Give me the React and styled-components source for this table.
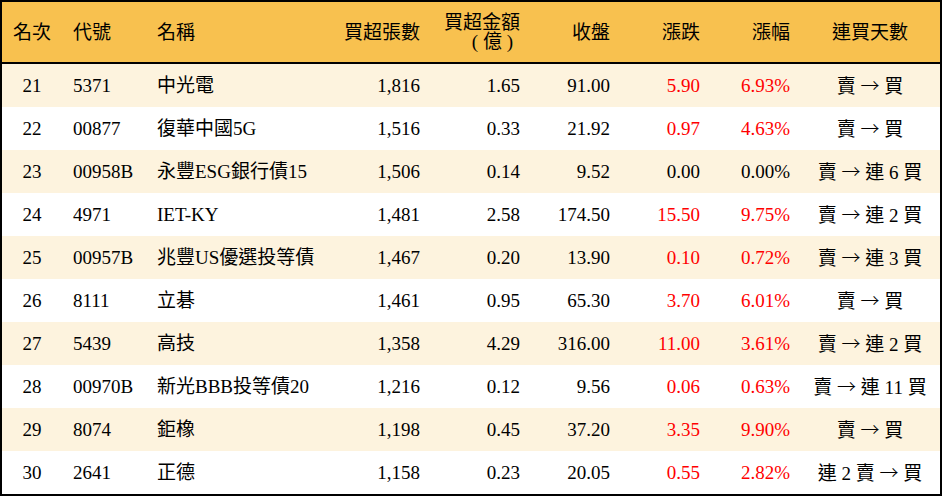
import React from "react";
import styled, { createGlobalStyle } from "styled-components";

const Global = createGlobalStyle`
  html, body { margin: 0; padding: 0; background: #fff; }
  body { font-family: "Liberation Serif", "Noto Sans CJK TC", serif; }
`;

const COLS = "60px 84px 184px 100px 100px 90px 90px 90px 140px";

const Table = styled.div`
  width: 942px;
  height: 496px;
  box-sizing: border-box;
  border: 2px solid #000;
  display: flex;
  flex-direction: column;
  font-family: "Liberation Serif", "Noto Sans CJK TC", serif;
  font-size: 19px;
  color: #000;
`;

const HeadRow = styled.div`
  display: grid;
  grid-template-columns: ${COLS};
  height: 60px;
  background: #f8c14f;
  border-bottom: 2px solid #000;
  flex: none;
`;

const Row = styled.div`
  display: grid;
  grid-template-columns: ${COLS};
  height: 43px;
  background: ${(p) => (p.$alt ? "#fdf3de" : "#ffffff")};
  flex: none;
`;

const Cell = styled.div`
  display: flex;
  flex-direction: column;
  justify-content: center;
  align-items: ${(p) =>
    p.$align === "right" ? "flex-end" : p.$align === "center" ? "center" : "flex-start"};
  text-align: ${(p) => p.$align || "left"};
  padding: ${(p) =>
    p.$align === "right" ? "0 10px 0 0" : p.$align === "center" ? "0" : "0 0 0 11px"};
  padding-left: ${(p) => (p.$padLeft ? p.$padLeft : undefined)};
  color: ${(p) => (p.$red ? "#ff0000" : "#000")};
  white-space: nowrap;
  line-height: 19px;
`;

const SubLine = styled.span`
  margin-right: 7px;
`;

const Flow = styled.span`
  word-spacing: 0;
`;

const Arrow = styled.span`
  display: inline-block;
  font-family: "Noto Sans CJK TC", sans-serif;
  font-weight: 300;
  font-size: 19px;
`;

const cols = [
  { key: "rank", label: "名次", align: "center" },
  { key: "code", label: "代號", align: "left" },
  { key: "name", label: "名稱", align: "left" },
  { key: "vol", label: "買超張數", align: "right" },
  { key: "amt", label: ["買超金額", "( 億 )"], align: "right" },
  { key: "close", label: "收盤", align: "right" },
  { key: "chg", label: "漲跌", align: "right", red: true },
  { key: "pct", label: "漲幅", align: "right", red: true },
  { key: "days", label: "連買天數", align: "center" },
];

const rows = [
  ["21", "5371", "中光電", "1,816", "1.65", "91.00", "5.90", "6.93%", ["賣", "買"]],
  ["22", "00877", "復華中國5G", "1,516", "0.33", "21.92", "0.97", "4.63%", ["賣", "買"]],
  ["23", "00958B", "永豐ESG銀行債15", "1,506", "0.14", "9.52", "0.00", "0.00%", ["賣", "連 6 買"]],
  ["24", "4971", "IET-KY", "1,481", "2.58", "174.50", "15.50", "9.75%", ["賣", "連 2 買"]],
  ["25", "00957B", "兆豐US優選投等債", "1,467", "0.20", "13.90", "0.10", "0.72%", ["賣", "連 3 買"]],
  ["26", "8111", "立碁", "1,461", "0.95", "65.30", "3.70", "6.01%", ["賣", "買"]],
  ["27", "5439", "高技", "1,358", "4.29", "316.00", "11.00", "3.61%", ["賣", "連 2 買"]],
  ["28", "00970B", "新光BBB投等債20", "1,216", "0.12", "9.56", "0.06", "0.63%", ["賣", "連 11 買"]],
  ["29", "8074", "鉅橡", "1,198", "0.45", "37.20", "3.35", "9.90%", ["賣", "買"]],
  ["30", "2641", "正德", "1,158", "0.23", "20.05", "0.55", "2.82%", ["連 2 賣", "買"]],
];

export default function App() {
  return (
    <>
      <Global />
      <Table>
        <HeadRow>
          {cols.map((c) => (
            <Cell key={c.key} $align={c.align}>
              {Array.isArray(c.label) ? (
                <>
                  <span>{c.label[0]}</span>
                  <SubLine>{c.label[1]}</SubLine>
                </>
              ) : (
                c.label
              )}
            </Cell>
          ))}
        </HeadRow>
        {rows.map((r, i) => (
          <Row key={r[0]} $alt={i % 2 === 0}>
            {r.map((v, j) => {
              const c = cols[j];
              const red = c.red && v !== "0.00" && v !== "0.00%";
              return (
                <Cell key={c.key} $align={c.align} $red={red}>
                  {Array.isArray(v) ? (
                    <Flow>
                      {v[0]} <Arrow>→</Arrow> {v[1]}
                    </Flow>
                  ) : (
                    v
                  )}
                </Cell>
              );
            })}
          </Row>
        ))}
      </Table>
    </>
  );
}
